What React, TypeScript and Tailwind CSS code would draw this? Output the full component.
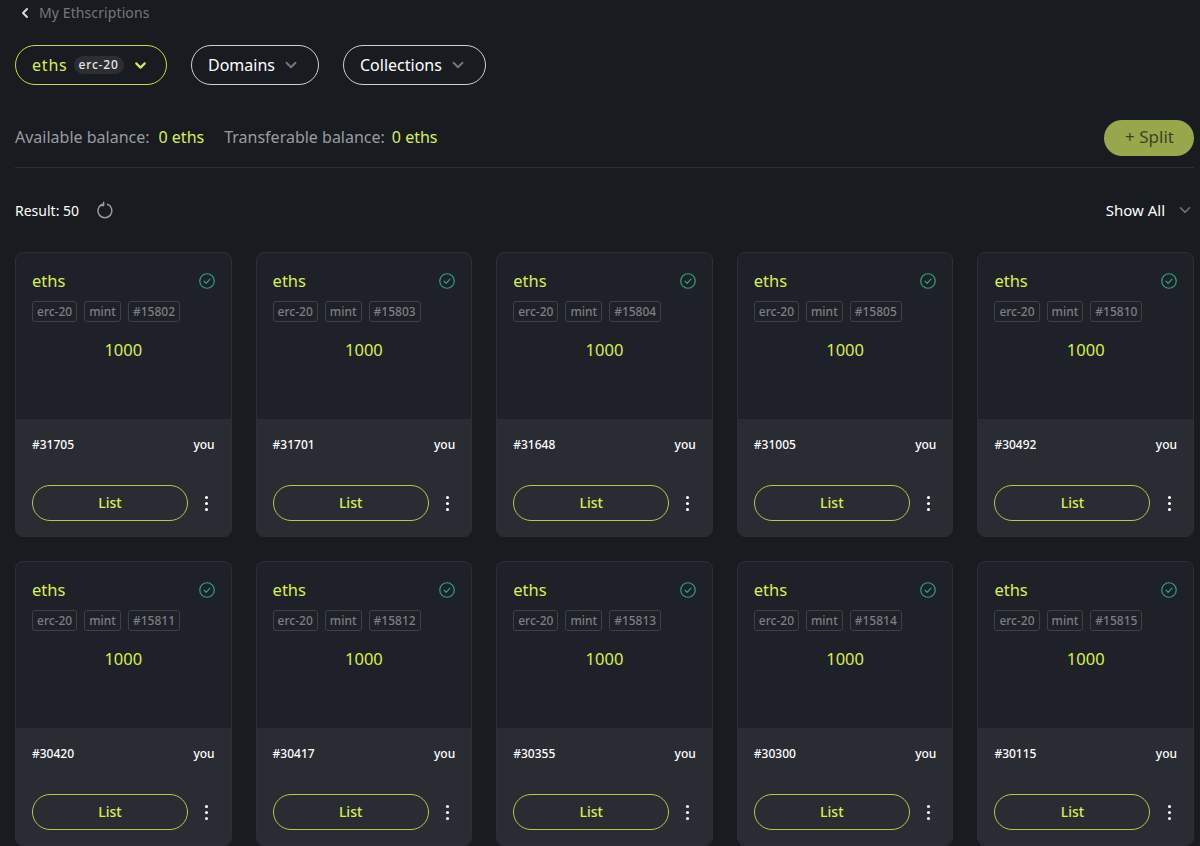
import { ChevronDown, ChevronLeft } from "lucide-react";

const cards = [
  { tag: "#15802", id: "#31705" },
  { tag: "#15803", id: "#31701" },
  { tag: "#15804", id: "#31648" },
  { tag: "#15805", id: "#31005" },
  { tag: "#15810", id: "#30492" },
  { tag: "#15811", id: "#30420" },
  { tag: "#15812", id: "#30417" },
  { tag: "#15813", id: "#30355" },
  { tag: "#15814", id: "#30300" },
  { tag: "#15815", id: "#30115" },
];

function CheckBadge() {
  return (
    <svg width="16" height="16" viewBox="0 0 16 16" fill="none" stroke="#2fa37f" className="shrink-0 mt-[2px]">
      <circle cx="8" cy="8" r="7.25" strokeWidth="1.2" />
      <path d="M5 8.2l2.1 2.1L11 6.2" strokeWidth="1.2" strokeLinecap="round" strokeLinejoin="round" />
    </svg>
  );
}

function Tag({ children }: { children: string }) {
  return (
    <span className="h-[21px] px-1 flex items-center rounded-[3px] border border-[#3d4046] text-[12px] font-medium leading-none text-[#7c7e83]">
      {children}
    </span>
  );
}

function Card({ tag, id }: { tag: string; id: string }) {
  return (
    <div className="h-[285px] rounded-lg border border-[#2c2f36] bg-[#1e2128] overflow-hidden flex flex-col">
      <div className="h-[166px] px-4 pt-[14px]">
        <div className="flex items-center justify-between h-[26px]">
          <span className="pt-[2px] text-[16.5px] leading-none text-[#d9ef4f]">eths</span>
          <CheckBadge />
        </div>
        <div className="flex gap-[7px] mt-[8px]">
          <Tag>erc-20</Tag>
          <Tag>mint</Tag>
          <Tag>{tag}</Tag>
        </div>
        <div className="mt-[16px] text-center text-[16.5px] leading-[24px] text-[#d9ef4f]">1000</div>
      </div>
      <div className="flex-1 bg-[#2a2c33] px-4 pt-[18px]">
        <div className="flex items-center justify-between h-[16px] text-[12px] font-medium text-white">
          <span>{id}</span>
          <span>you</span>
        </div>
        <div className="flex items-center mt-[32px]">
          <button className="w-[156px] h-[36px] pb-[2px] rounded-full border-[1.5px] border-[#b5c94a] text-[14px] font-medium text-[#d9ef4f]">
            List
          </button>
          <div className="flex flex-1 flex-col items-center gap-[3px] pl-[11px]">
            <span className="size-[3px] rounded-full bg-white" />
            <span className="size-[3px] rounded-full bg-white" />
            <span className="size-[3px] rounded-full bg-white" />
          </div>
        </div>
      </div>
    </div>
  );
}

export default function App() {
  return (
    <div
      className="h-[846px] overflow-hidden bg-[#181b20] pl-[15px] pr-[6px]"
      style={{ fontFamily: '"Noto Sans", sans-serif' }}
    >
      <div className="flex items-center h-[25px] pl-[2px] text-[14px] tracking-[0.1px] text-[#75777c]">
        <ChevronLeft size={16} strokeWidth={3} className="text-[#d9d9d9] mr-[6px]" />
        My Ethscriptions
      </div>

      <div className="flex gap-6 mt-[20px]">
        <button className="h-[40px] w-[152px] pl-[16px] rounded-full border-[1.5px] border-[#c5dc45] flex items-center text-[16px] tracking-[0.8px] text-[#d9ef4f]">
          eths
          <span className="ml-[6px] h-[18px] px-[5px] flex items-center rounded-full bg-[#2c2e34] text-[12px] font-medium tracking-[0.8px] text-[#e8e8e8]">
            erc-20
          </span>
          <ChevronDown size={17} strokeWidth={3} className="ml-[8px]" />
        </button>
        <button className="h-[40px] w-[128px] pl-[16px] rounded-full border-[1.5px] border-[#d0d0d0] flex items-center text-[16px] text-white">
          Domains
          <ChevronDown size={18} strokeWidth={2.5} className="ml-[7px] text-[#75777c]" />
        </button>
        <button className="h-[40px] w-[143px] pl-[16px] rounded-full border-[1.5px] border-[#d0d0d0] flex items-center text-[16px] text-white">
          Collections
          <ChevronDown size={18} strokeWidth={2.5} className="ml-[7px] text-[#75777c]" />
        </button>
      </div>

      <div className="flex items-center justify-between mt-[35px] pb-[11px] border-b border-[#2c2f36]">
        <div className="flex items-center pb-[2px] text-[16px] text-[#9a9ba0]">
          <span>Available balance:</span>
          <span className="ml-[9px] text-[#d9ef4f]">0 eths</span>
          <span className="ml-[20px]">Transferable balance:</span>
          <span className="ml-[7px] text-[#d9ef4f]">0 eths</span>
        </div>
        <button className="w-[90px] h-[36px] pl-[1px] pb-[2px] rounded-full bg-[#98a64c] text-[17px] text-[#3c4325]">+ Split</button>
      </div>

      <div className="flex items-center justify-between mt-[30px] h-[24px] text-[14px] text-white">
        <div className="flex items-center">
          Result: 50
          <svg width="18" height="18" viewBox="0 0 18 18" fill="none" stroke="#9a9ba0" strokeWidth="1.5" strokeLinecap="round" strokeLinejoin="round" className="ml-[17px]">
            <path d="M11.5 3.2a7 7 0 1 1-5.2 0" />
            <path d="M7.6 1.2v3.4H4.4" />
          </svg>
        </div>
        <div className="flex items-center text-[15px]">
          Show All
          <ChevronDown size={18} strokeWidth={2} className="ml-[11px] text-[#75777c]" />
        </div>
      </div>

      <div className="grid grid-cols-5 gap-6 mt-[30px]">
        {cards.map((c) => (
          <Card key={c.id} tag={c.tag} id={c.id} />
        ))}
      </div>
    </div>
  );
}
